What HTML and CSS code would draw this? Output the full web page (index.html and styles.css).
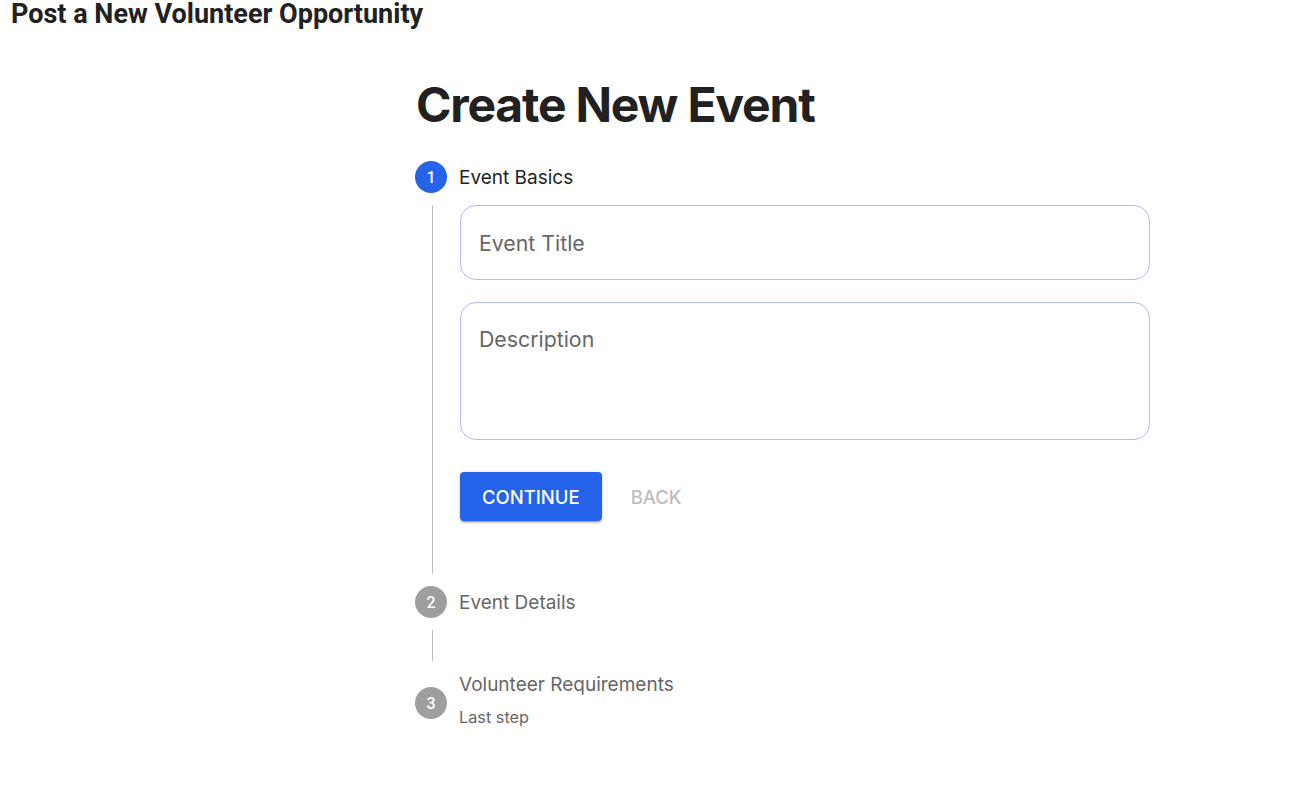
FILE: index.html
```html
<!DOCTYPE html>
<html lang="en">
<head>
<meta charset="utf-8">
<title>Post a New Volunteer Opportunity</title>
<link rel="stylesheet" href="styles.css">
</head>
<body>
<h1 class="page-title">Post a New Volunteer Opportunity</h1>
<main class="wizard">
  <h2 class="wizard-title">Create New Event</h2>
  <ol class="stepper">
    <li class="step step-active">
      <div class="step-head">
        <span class="step-icon icon-active">1</span>
        <span class="step-label label-active">Event Basics</span>
      </div>
      <div class="step-content">
        <input class="field field-title" type="text" placeholder="Event Title">
        <textarea class="field field-desc" placeholder="Description"></textarea>
        <div class="actions">
          <button class="btn btn-primary" type="button">CONTINUE</button>
          <button class="btn btn-text" type="button" disabled>BACK</button>
        </div>
      </div>
    </li>
    <li class="step step-two">
      <div class="step-head">
        <span class="step-icon">2</span>
        <span class="step-label">Event Details</span>
      </div>
      <div class="connector"></div>
    </li>
    <li class="step step-three">
      <div class="step-head step-head-top">
        <span class="step-icon icon-offset">3</span>
        <div class="label-block">
          <span class="step-label label-tight">Volunteer Requirements</span>
          <span class="step-caption">Last step</span>
        </div>
      </div>
    </li>
  </ol>
</main>
</body>
</html>
```
FILE: styles.css
```css
* { box-sizing: border-box; }

html, body {
  margin: 0;
  padding: 0;
  background: #ffffff;
}

body {
  font-family: "Inter", "Roboto", sans-serif;
  color: #1f1f1f;
}

.page-title {
  margin: 0;
  padding: 0 0 0 11px;
  font-family: "Roboto", "Liberation Sans", sans-serif;
  font-size: 27px;
  line-height: 28px;
  font-weight: 700;
  color: #212121;
}

.wizard {
  width: 743px;
  margin: 48px 0 0 415px;
}

.wizard-title {
  margin: 0 0 0 1px;
  font-family: "Inter", sans-serif;
  font-size: 48px;
  line-height: 58px;
  font-weight: 700;
  color: #212121;
  letter-spacing: -1.2px;
}

.stepper {
  list-style: none;
  margin: 27px 0 0 0;
  padding: 0;
}

.step-head {
  display: flex;
  align-items: center;
  gap: 12px;
}

.step-head-top {
  align-items: flex-start;
}

.step-icon {
  flex: 0 0 32px;
  width: 32px;
  height: 32px;
  border-radius: 50%;
  background: #9e9e9e;
  color: #ffffff;
  display: flex;
  align-items: center;
  justify-content: center;
  font-family: "Roboto", sans-serif;
  font-size: 16px;
  font-weight: 500;
}

.icon-active {
  background: #2563eb;
}

.icon-offset {
  margin-top: 14px;
}

.step-label {
  font-size: 19px;
  line-height: 27px;
  color: #666666;
}

.label-active {
  color: #1f1f1f;
}

.label-block {
  display: flex;
  flex-direction: column;
}

.label-tight {
  line-height: 24px;
}

.step-caption {
  margin-top: 10px;
  font-size: 16.3px;
  line-height: 20px;
  color: #666666;
}

.step-content {
  margin: 12px 0 0 17px;
  border-left: 1px solid #bdbdbd;
  padding: 0 8px 53px 27px;
}

.field {
  display: block;
  width: 100%;
  border: 1px solid #b4b8f6;
  border-radius: 16px;
  padding: 22px 18px;
  font-family: "Inter", sans-serif;
  font-size: 21.3px;
  line-height: 29px;
  color: #1f1f1f;
  background: #ffffff;
  outline: none;
}

.field::placeholder {
  color: #666666;
}

.field-title {
  height: 75px;
}

.field-desc {
  height: 138px;
  margin-top: 22px;
  resize: none;
}

.actions {
  display: flex;
  align-items: center;
  gap: 7px;
  margin-top: 32px;
}

.btn {
  font-family: "Inter", sans-serif;
  font-size: 18.5px;
  font-weight: 500;
  line-height: 24px;
  height: 49px;
  padding: 0 22px;
  border-radius: 4px;
  border: none;
  background: transparent;
  cursor: pointer;
}

.btn-primary {
  background: #2563eb;
  color: #ffffff;
  box-shadow: 0 3px 1px -2px rgba(0,0,0,0.2), 0 2px 2px 0 rgba(0,0,0,0.14), 0 1px 5px 0 rgba(0,0,0,0.12);
}

.btn-text {
  color: #bdbdbd;
}

.step-two {
  margin-top: 12px;
}

.connector {
  margin: 12px 0 0 17px;
  height: 31px;
  border-left: 1px solid #bdbdbd;
}

.step-three {
  margin-top: 12px;
}
```
